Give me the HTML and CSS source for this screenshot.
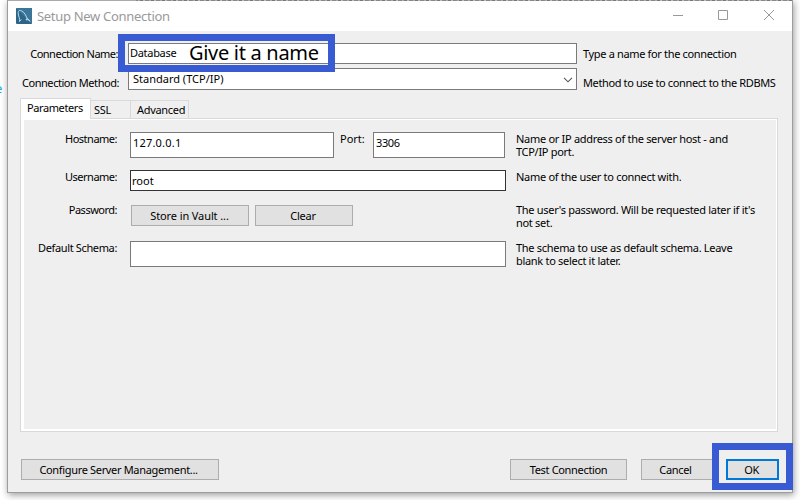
FILE: index.html
```html
<!DOCTYPE html>
<html lang="en">
<head>
<meta charset="utf-8">
<title>Setup New Connection</title>
<link rel="stylesheet" href="styles.css">
</head>
<body>
<div class="backdrop-strip"></div>
<div class="backdrop-letter">e</div>
<main class="window">
  <header class="titlebar">
    <svg class="logo" width="16" height="16" viewBox="0 0 16 16"><rect width="16" height="16" rx="1" fill="#2e6689"/><path d="M0 0h16v16z" fill="#3a7699"/><path d="M3.500 13.500C4.500 11 2 8 2.200 4.500C2.300 2 4 2 6 3.200C8.500 4.500 10 7.500 11 10.200L14 13M11 10.200l-1 1.800 2-.5 2 2M3.500 13.500l1.800-2" fill="none" stroke="#cfe3ee" stroke-width=".9"/></svg>
    <h1 class="title">Setup New Connection</h1>
    <svg class="controls" width="108" height="12" viewBox="0 0 108 12" fill="none" stroke="#999"><path d="M0 6.500h10M45.500 1.500h9v9h-9zM91 1l10 10M101 1L91 11"/></svg>
  </header>
  <section class="connection">
    <label class="label name-label">Connection Name:</label>
    <div class="field name-field">Database</div>
    <p class="hint name-hint">Type a name for the connection</p>
    <label class="label method-label">Connection Method:</label>
    <div class="field select"><span>Standard (TCP/IP)</span><svg width="10" height="6" viewBox="0 0 10 6"><path d="M1 .8l4 4 4-4" fill="none" stroke="#555" stroke-width="1.100"/></svg></div>
    <p class="hint method-hint">Method to use to connect to the RDBMS</p>
  </section>
  <nav class="tabs">
    <span class="tab active">Parameters</span><span class="tab ssl">SSL</span><span class="tab advanced">Advanced</span>
  </nav>
  <section class="panel">
    <div class="row host-row">
      <label class="label">Hostname:</label>
      <div class="inputs"><div class="field host">127.0.0.1</div><label class="port-label">Port:</label><div class="field port">3306</div></div>
      <p class="hint">Name or IP address of the server host - and<br>TCP/IP port.</p>
    </div>
    <div class="row user-row">
      <label class="label">Username:</label>
      <div class="field user">root</div>
      <p class="hint">Name of the user to connect with.</p>
    </div>
    <div class="row pass-row">
      <label class="label">Password:</label>
      <div class="inputs"><button class="button vault">Store in Vault ...</button><button class="button clear">Clear</button></div>
      <p class="hint">The user's password. Will be requested later if it's<br>not set.</p>
    </div>
    <div class="row schema-row">
      <label class="label schema-label">Default Schema:</label>
      <div class="field schema"></div>
      <p class="hint">The schema to use as default schema. Leave<br>blank to select it later.</p>
    </div>
  </section>
  <footer class="actions">
    <button class="button configure">Configure Server Management...</button>
    <button class="button test">Test Connection</button>
    <button class="button cancel">Cancel</button>
    <button class="button ok">OK</button>
  </footer>
</main>
<div class="callout name-callout"><span>Give it a name</span></div>
<div class="callout ok-callout"></div>
</body>
</html>
```
FILE: styles.css
```css
* { box-sizing: border-box; }
body { margin: 0; width: 800px; height: 500px; overflow: hidden; position: relative; background: #fff; color: #000; font: 11px/13px "Noto Sans", sans-serif; }
h1, p { margin: 0; font-weight: normal; }
.backdrop-strip { position: absolute; z-index: 1; left: 8px; top: 0; width: 784px; height: 1px; background: linear-gradient(90deg, #aaa 0 128px, transparent 128px), repeating-linear-gradient(90deg, #777 0 3px, #bbb 3px 5px, #888 5px 9px, #aaa 9px 11px); }
.backdrop-letter { position: absolute; left: -5px; top: 82px; color: #20a8e0; font-size: 13px; }
.window { position: absolute; left: 7px; top: 0; width: 786px; height: 493px; border: 1px solid #9d9d9d; background: #efefef; box-shadow: 1px 2px 7px rgba(0,0,0,.4); }
.titlebar { display: flex; align-items: center; height: 30px; background: #fff; padding-left: 8px; }
.title { flex: 1; margin: -1px 0 0 5px; font: 13px/18px "Noto Sans", sans-serif; letter-spacing: -.3px; color: #999; }
.controls { margin-right: 11px; margin-top: -2px; }
.connection { display: grid; grid-template-columns: 111px 449px 1fr; column-gap: 9px; height: 67px; padding-top: 12px; grid-template-rows: 21px 22px; row-gap: 4px; }
.hint { letter-spacing: -.3px; }
.connection .hint { margin-left: -3px; letter-spacing: -.34px; }
.connection .method-hint { letter-spacing: -.38px; }
.label { text-align: right; white-space: nowrap; letter-spacing: -.5px; }
.name-label, .name-hint { padding-top: 4px; }
.name-label { padding-right: 1px; }
.method-label { letter-spacing: -.45px; }
.method-label, .method-hint { padding-top: 8px; }
.field { background: #fff; border: 1px solid #7a7a7a; padding: 3px 2px; white-space: nowrap; }
.name-field { padding: 2px 1px; letter-spacing: -.3px; }
.select { display: flex; justify-content: space-between; padding: 3px 4px; }
.select svg { margin: 5px -1px 0 0; }
.tabs { display: flex; align-items: flex-end; height: 20px; margin-left: 12px; position: relative; z-index: 1; }
.tab { height: 18px; border: 1px solid #d9d9d9; border-left: 0; border-bottom: 0; padding: 2px 3px 0; }
.tab.active { width: 71px; height: 21px; margin-bottom: -1px; background: #fff; border-left: 1px solid #d9d9d9; padding: 2px 6px 0; letter-spacing: -.4px; }
.ssl { width: 40px; letter-spacing: -.3px; }
.advanced { width: 58px; padding-left: 6px; letter-spacing: -.3px; }
.panel { width: 758px; height: 314px; margin-left: 12px; border: 1px solid #d9d9d9; box-shadow: inset 3px 1px #fff, inset -1px -2px #fff; padding: 13px 0 0 9px; }
.row { display: grid; grid-template-columns: 87px 376px 250px; grid-template-rows: 26px; column-gap: 13px; }
.row .hint { margin-left: -3px; white-space: nowrap; }
.schema-label { letter-spacing: -.36px; }
.inputs { display: flex; }
.host { width: 204px; letter-spacing: .2px; }
.row .host, .row .port { padding-top: 3px; }
.port { width: 132px; letter-spacing: -.4px; }
.port-label { width: 39px; padding: 0 0 0 6px; }
.user-row { margin-top: 12px; }
.user { height: 21px; border-color: #333; padding: 3px 1px; }
.pass-row { margin-top: 7px; }
.pass-row .inputs { padding: 2px 0 0 1px; gap: 6px; }
.schema-row { margin-top: 12px; }
.button { height: 21px; border: 1px solid #adadad; background: #e1e1e1; padding: 0; font: 11px/13px "Noto Sans", sans-serif; letter-spacing: -.33px; color: #000; white-space: nowrap; }
.pass-row .button { height: 21px; padding-bottom: 1px; }
.pass-row .vault { letter-spacing: -.1px; padding-right: 1px; }
.vault { width: 118px; }
.clear { width: 98px; }
.pass-row .clear { padding-right: 2px; letter-spacing: -.2px; }
.actions { display: flex; padding: 27px 13px 0; }
.configure { width: 198px; margin-right: 291px; padding-right: 3px; }
.test { width: 117px; margin-right: 14px; }
.cancel { width: 77px; margin-right: 8px; padding-right: 8px; }
.ok { width: 53px; border: 2px solid #0078d7; padding-right: 2px; }
.callout { position: absolute; border: 7px solid #385ad3; }
.name-callout { left: 118px; top: 34px; width: 217px; height: 38px; padding-left: 64px; font: 20px/24px "Noto Sans", sans-serif; letter-spacing: -.3px; white-space: nowrap; }
.ok-callout { left: 712px; top: 443px; width: 81px; height: 47px; }
```
